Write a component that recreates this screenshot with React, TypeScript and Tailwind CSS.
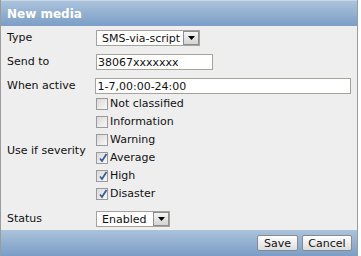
import React, { useState } from 'react';

const font = { fontFamily: '"DejaVu Sans", Verdana, sans-serif' };

const Arrow = () => (
  <span className="flex h-full w-[16px] items-center justify-center border border-[#8e8e8e] bg-gradient-to-b from-[#f4f4f4] to-[#d4d4d4]">
    <svg width="7" height="4" viewBox="0 0 7 4">
      <path d="M0 0h7L3.5 4z" fill="#000" />
    </svg>
  </span>
);

const Select = ({ value, width }: { value: string; width: string }) => (
  <div className={`flex h-[16px] items-center border border-[#a5a39a] bg-white ${width}`}>
    <span className="flex-1 pl-[5px] leading-none text-[#111]">{value}</span>
    <Arrow />
  </div>
);

const Check = ({ checked, label, onToggle }: { checked: boolean; label: string; onToggle: () => void }) => (
  <div className="flex h-[18px] cursor-pointer items-center" onClick={onToggle}>
    <span className="relative mr-[2px] h-[12px] w-[12px] border border-[#9a9a9a] bg-gradient-to-br from-[#d9d9d9] to-[#f8f8f8]">
      {checked && (
        <svg className="absolute left-[1px] top-[0px]" width="10" height="10" viewBox="0 0 10 10">
          <path d="M2 5.5l2 2.5 4.5-7" stroke="#3b5b9a" strokeWidth="1.8" fill="none" />
        </svg>
      )}
    </span>
    <span className="text-[#111]">{label}</span>
  </div>
);

const App: React.FC = () => {
  const [sev, setSev] = useState([false, false, false, true, true, true]);
  const names = ['Not classified', 'Information', 'Warning', 'Average', 'High', 'Disaster'];

  return (
    <div className="h-[256px] w-[361px] overflow-hidden bg-white text-[11px]" style={font}>
      <div className="flex h-[256px] w-[358px] flex-col border-x border-[#9c9c9c] bg-[#eeeeee]">
        {/* Header */}
        <div className="flex h-[26px] shrink-0 items-center border-t border-[#c9d6e4] bg-gradient-to-b from-[#abc3dc] to-[#7b9dc6] pl-[6px]">
          <span className="text-[12px] font-bold text-white">New media</span>
        </div>

        {/* Form */}
        <div className="flex flex-col px-[6px] pt-[4px]">
          <div className="flex h-[16px] items-center">
            <span className="w-[89px] text-[#111]">Type</span>
            <Select value="SMS-via-script" width="w-[104px]" />
          </div>
          <div className="mt-[8px] flex h-[16px] items-center">
            <span className="w-[89px] text-[#111]">Send to</span>
            <div className="flex h-[16px] w-[117px] items-center border border-[#a5a39a] bg-white pl-[1px] leading-none text-[#111]">
              38067xxxxxxx
            </div>
          </div>
          <div className="mt-[8px] flex h-[16px] items-center">
            <span className="w-[89px] text-[#111]">When active</span>
            <div className="flex h-[16px] w-[257px] items-center border border-[#a5a39a] bg-white pl-[1px] leading-none text-[#111]">
              1-7,00:00-24:00
            </div>
          </div>
          <div className="mt-[1px] flex items-center">
            <span className="w-[89px] pt-[4px] text-[#111]">Use if severity</span>
            <div className="flex flex-col">
              {names.map((n, i) => (
                <Check
                  key={n}
                  label={n}
                  checked={sev[i]}
                  onToggle={() => setSev(sev.map((v, j) => (j === i ? !v : v)))}
                />
              ))}
            </div>
          </div>
          <div className="mt-[8px] flex h-[16px] items-center">
            <span className="w-[89px] text-[#111]">Status</span>
            <Select value="Enabled" width="w-[74px]" />
          </div>
        </div>

        {/* Footer */}
        <div className="mt-auto flex h-[26px] shrink-0 items-center justify-end gap-[4px] bg-gradient-to-b from-[#abc3dc] to-[#7b9dc6] pr-[5px]">
          <button className="h-[16px] w-[41px] rounded-[2px] border border-[#8a8a8a] bg-gradient-to-b from-[#ffffff] to-[#dcdcdc] leading-none text-[#111]">
            Save
          </button>
          <button className="h-[16px] w-[50px] rounded-[2px] border border-[#8a8a8a] bg-gradient-to-b from-[#ffffff] to-[#dcdcdc] leading-none text-[#111]">
            Cancel
          </button>
        </div>
      </div>
    </div>
  );
};

export default App;
